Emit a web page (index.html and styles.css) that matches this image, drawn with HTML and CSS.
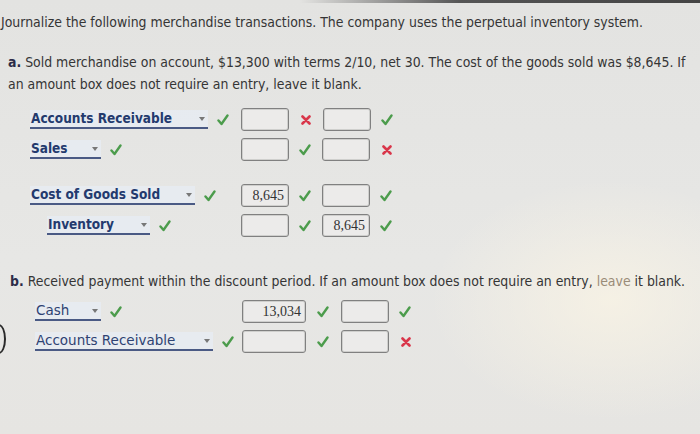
FILE: index.html
```html
<!DOCTYPE html>
<html>
<head>
<meta charset="utf-8">
<link rel="stylesheet" href="styles.css">
</head>
<body>
<svg width="0" height="0" class="defs">
  <symbol id="ok" viewBox="0 0 12 12"><polyline points="1.5,6.5 4.5,10 10.5,1.5" fill="none" stroke="currentColor" stroke-width="2.4" stroke-linecap="round" stroke-linejoin="round"/></symbol>
  <symbol id="bad" viewBox="0 0 10 10"><path d="M1.5 1.5 L8.5 8.5 M8.5 1.5 L1.5 8.5" fill="none" stroke="currentColor" stroke-width="2.6" stroke-linecap="round"/></symbol>
</svg>
<div class="topbar"></div>
<div class="edge"></div>
<main class="page">
  <p class="intro">Journalize the following merchandise transactions. The company uses the perpetual inventory system.</p>

  <section class="part part-a">
    <p class="prompt"><b>a.</b> Sold merchandise on account, $13,300 with terms 2/10, net 30. The cost of the goods sold was $8,645. If an amount box does not require an entry, leave it blank.</p>

    <div class="entry">
      <div class="row">
        <div class="acct"><span class="select w-ar">Accounts Receivable<i class="arrow"></i></span><svg class="mark ok"><use href="#ok"/></svg></div>
        <span class="box"></span><svg class="mark bad"><use href="#bad"/></svg>
        <span class="box"></span><svg class="mark ok"><use href="#ok"/></svg>
      </div>
      <div class="row">
        <div class="acct"><span class="select w-sales">Sales<i class="arrow"></i></span><svg class="mark ok"><use href="#ok"/></svg></div>
        <span class="box"></span><svg class="mark ok"><use href="#ok"/></svg>
        <span class="box"></span><svg class="mark bad"><use href="#bad"/></svg>
      </div>
    </div>

    <div class="entry">
      <div class="row">
        <div class="acct"><span class="select w-cogs">Cost of Goods Sold<i class="arrow"></i></span><svg class="mark ok"><use href="#ok"/></svg></div>
        <span class="box">8,645</span><svg class="mark ok"><use href="#ok"/></svg>
        <span class="box"></span><svg class="mark ok"><use href="#ok"/></svg>
      </div>
      <div class="row">
        <div class="acct indent"><span class="select w-inv">Inventory<i class="arrow"></i></span><svg class="mark ok"><use href="#ok"/></svg></div>
        <span class="box"></span><svg class="mark ok"><use href="#ok"/></svg>
        <span class="box">8,645</span><svg class="mark ok"><use href="#ok"/></svg>
      </div>
    </div>
  </section>

  <section class="part part-b">
    <p class="prompt"><b>b.</b> Received payment within the discount period. If an amount box does not require an entry, <span class="glare">leave</span> it blank.</p>

    <div class="entry">
      <div class="row">
        <div class="acct"><span class="select w-cash">Cash<i class="arrow"></i></span><svg class="mark ok"><use href="#ok"/></svg></div>
        <span class="box wide">13,034</span><svg class="mark ok"><use href="#ok"/></svg>
        <span class="box"></span><svg class="mark ok"><use href="#ok"/></svg>
      </div>
      <div class="row">
        <div class="acct"><span class="select w-ar">Accounts Receivable<i class="arrow"></i></span><svg class="mark ok"><use href="#ok"/></svg></div>
        <span class="box wide"></span><svg class="mark ok"><use href="#ok"/></svg>
        <span class="box"></span><svg class="mark bad"><use href="#bad"/></svg>
      </div>
    </div>
  </section>
</main>
</body>
</html>
```

FILE: styles.css
```css
html, body {
  margin: 0;
  padding: 0;
}
body {
  width: 700px;
  height: 434px;
  overflow: hidden;
  position: relative;
  background:
    radial-gradient(ellipse 180px 120px at 610px 300px, rgba(250, 244, 228, 0.75), rgba(250, 244, 228, 0) 100%),
    linear-gradient(180deg, #e3e3e1 0%, #e7e7e5 60%, #e6e5e2 100%);
  font-family: "DejaVu Sans Condensed", "DejaVu Sans", sans-serif;
  color: #353535;
}
.defs {
  position: absolute;
}
.topbar {
  position: absolute;
  top: 0;
  left: 300px;
  right: 0;
  height: 3px;
  background: linear-gradient(90deg, rgba(80, 80, 80, 0), #555 40%, #444);
}
.edge {
  position: absolute;
  left: -8px;
  top: 324px;
  width: 10px;
  height: 26px;
  border: 2px solid #2a2a2a;
  border-radius: 50%;
}
.page {
  padding: 13px 0 0 0;
}
p {
  margin: 0;
}
.intro {
  font-size: 13.9px;
  line-height: 18px;
  padding-left: 1px;
}
.prompt {
  font-size: 13.9px;
  line-height: 22px;
  padding-left: 8px;
  width: 690px;
}
.prompt b {
  color: #2c2c48;
}
.part-a {
  margin-top: 20px;
}
.part-a .prompt {
  margin-bottom: 13px;
}
.part-b {
  margin-top: 33px;
}
.part-b .prompt {
  padding-left: 10px;
  margin-bottom: 8px;
}
.glare {
  color: #9a8c78;
}
.entry {
  display: flex;
  flex-direction: column;
  gap: 7px;
}
.part-a .entry + .entry {
  margin-top: 23px;
}
.row {
  display: flex;
  align-items: center;
  height: 23px;
}
.acct {
  width: 241px;
  display: flex;
  align-items: center;
  gap: 9px;
  padding-left: 30px;
  box-sizing: border-box;
}
.acct.indent {
  padding-left: 47px;
}
.part-b .acct {
  width: 242px;
  padding-left: 35px;
}
.select {
  position: relative;
  display: inline-block;
  font-weight: bold;
  font-size: 13.5px;
  line-height: 17px;
  color: #233a6e;
  background: rgba(232, 238, 248, 0.6);
  border-bottom: 2px solid #4a5a84;
  padding-left: 1px;
  box-sizing: border-box;
}
.part-b .select {
  font-family: "DejaVu Sans", sans-serif;
  color: #2e4272;
  font-weight: normal;
  font-size: 13.5px;
}
.arrow {
  position: absolute;
  right: 3px;
  top: 7px;
  width: 0;
  height: 0;
  border-left: 3px solid transparent;
  border-right: 3px solid transparent;
  border-top: 4px solid #777;
}
.w-ar { width: 178px; }
.w-sales { width: 71px; }
.w-cogs { width: 165px; }
.w-inv { width: 103px; }
.w-cash { width: 66px; }
.mark {
  width: 12px;
  height: 12px;
  flex: none;
}
.mark.ok {
  color: #4c9c4c;
}
.mark.bad {
  color: #d9364a;
  width: 10px;
  height: 10px;
}
.box {
  width: 48px;
  height: 23px;
  box-sizing: border-box;
  border: 1px solid #808080;
  border-radius: 3px;
  box-shadow: inset 0 0 0 1px #cfcfcd;
  background: #ecebea;
  font-family: "Liberation Serif", "DejaVu Serif", serif;
  font-size: 14px;
  line-height: 21px;
  text-align: right;
  padding-right: 4px;
  color: #333;
  flex: none;
}
.box.wide {
  width: 64px;
}
.row > .mark {
  margin: 0 10px;
}
.row > .mark.ok {
  margin: 0 11px 0 10px;
}
.row > .mark.bad {
  margin: 0 12px 0 12px;
}
.part-b .row > .box:first-of-type + .mark {
  margin: 0 12px 0 11px;
}
```
